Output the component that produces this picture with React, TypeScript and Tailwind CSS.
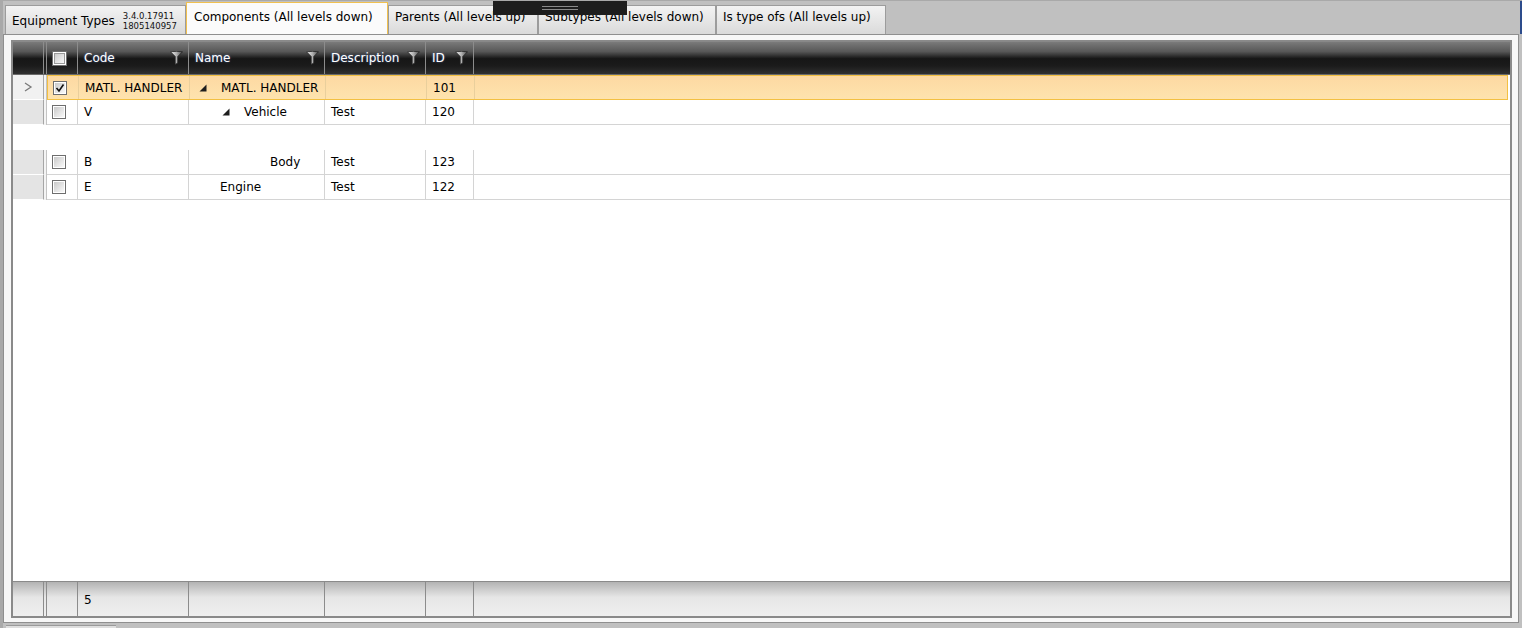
import React from "react";

const font = "font-['DejaVu_Sans','Liberation_Sans',sans-serif]";

const FilterIcon = () => (
  <svg width="13" height="14" viewBox="0 0 13 14" className="shrink-0">
    <defs>
      <linearGradient id="fg" x1="0" y1="0" x2="1" y2="0">
        <stop offset="0" stopColor="#f4f4f4" />
        <stop offset="0.5" stopColor="#b0b0b0" />
        <stop offset="1" stopColor="#4a4a4a" />
      </linearGradient>
    </defs>
    <path d="M0.5 0.8 Q6.5 -0.2 12.5 0.8 L7.8 5.5 V12 L5.2 13.5 V5.5 Z" fill="url(#fg)" stroke="#222" strokeWidth="0.8" />
  </svg>
);

const Expander = () => (
  <svg width="8" height="8" viewBox="0 0 8 8" className="shrink-0">
    <path d="M7.5 0.5 V7.5 H0.5 Z" fill="#1e1e1e" />
  </svg>
);

const Check = ({ checked, header }: { checked?: boolean; header?: boolean }) => (
  <div
    className={`flex items-center justify-center border border-[#6e6e6e] bg-white ${
      header ? "w-[15px] h-[15px]" : "w-[14px] h-[14px]"
    }`}
  >
    <div
      className={`flex items-center justify-center bg-[linear-gradient(135deg,#c9c9c9,#f9f9f9)] ${
        header ? "w-[11px] h-[11px] border border-[#9a9a9a]" : "w-[10px] h-[10px]"
      }`}
    >
      {checked && (
        <svg width="10" height="10" viewBox="0 0 10 10">
          <path d="M1.5 5 L4 8 L8.5 1.5" fill="none" stroke="#111" strokeWidth="1.6" />
        </svg>
      )}
    </div>
  </div>
);

const HeaderCell = ({ label, w, filter = true }: any) => (
  <div className={`${w} h-full flex items-center justify-between pl-[6px] pr-[5px] border-r border-[#8c8c8c] text-white text-[12px]`}>
    <span className="[text-shadow:0_0_2px_rgba(120,160,255,0.6)]">{label}</span>
    {filter && <FilterIcon />}
  </div>
);

const rows = [
  { code: "MATL. HANDLER", name: "MATL. HANDLER", pad: "pl-[9px]", exp: true, desc: "", id: "101", sel: true },
  { code: "V", name: "Vehicle", pad: "pl-[33px]", exp: true, desc: "Test", id: "120" },
  null,
  { code: "B", name: "Body", pad: "pl-[81px]", exp: false, desc: "Test", id: "123" },
  { code: "E", name: "Engine", pad: "pl-[31px]", exp: false, desc: "Test", id: "122" },
];

const Row = ({ r }: any) => {
  if (!r) return <div className="h-[25px] bg-white" />;
  const line = r.sel ? "border-[#e9cf9c]" : "border-[#d4d4d4]";
  return (
    <div className="flex h-[25px] text-[12px] text-black">
      <div className={`w-[31px] h-full border-r border-[#a6a6a6] border-b border-b-white flex items-center justify-center ${r.sel ? "bg-[#f1f1f1]" : "bg-[#e4e4e4]"}`}>
        {r.sel && (
          <svg width="10" height="10" viewBox="0 0 10 10">
            <path d="M2 1 L8 5 L2 9" fill="none" stroke="#7a7a7a" strokeWidth="1.3" />
          </svg>
        )}
      </div>
      <div className="w-[3px] h-full border-r border-[#c4c4c4] bg-[#f4f4f4]" />
      <div
        className={`flex flex-1 h-full ${
          r.sel
            ? "border border-[#f3c042] bg-[linear-gradient(to_bottom,#fdd9a2,#fee3ae)] mr-[2px]"
            : "border-b border-[#d4d4d4] bg-white"
        }`}
      >
        <div className={`w-[31px] h-full border-r ${line} flex items-center pl-[5px]`}>
          <Check checked={r.sel} />
        </div>
        <div className={`w-[111px] h-full border-r ${line} flex items-center pl-[6px] whitespace-nowrap`}>{r.code}</div>
        <div className={`w-[136px] h-full border-r ${line} flex items-center ${r.pad} whitespace-nowrap`}>
          {r.exp && (
            <span className="mr-[14px] flex">
              <Expander />
            </span>
          )}
          {r.name}
        </div>
        <div className={`w-[101px] h-full border-r ${line} flex items-center pl-[6px]`}>{r.desc}</div>
        <div className={`w-[48px] h-full border-r ${line} flex items-center pl-[6px]`}>{r.id}</div>
        <div className="flex-1" />
      </div>
    </div>
  );
};

const tabBase = "h-[29px] px-[6px] pt-[2px] border border-b-0 border-[#9c9c9c] bg-[linear-gradient(to_bottom,#f3f3f3,#dadada)] text-[12px] text-black whitespace-nowrap";

export default function App() {
  return (
    <div className={`relative w-[1522px] h-[628px] overflow-hidden bg-[#c0c0c0] border-t border-l-[3px] border-[#a9a9a9] ${font}`}>
      {/* Tabs */}
      <div className="flex items-end h-[33px] pl-[2px]">
        <div className={`${tabBase} w-[181px] flex items-center gap-[8px] pt-0`}>
          <span>Equipment Types</span>
          <div className="text-[8.5px] leading-[10px] text-[#111]">
            <div>3.4.0.17911</div>
            <div>1805140957</div>
          </div>
        </div>
        <div className="h-[32px] w-[202px] px-[7px] pt-[5px] border border-b-0 border-[#f0c050] bg-[#fbfbfb] text-[12px] whitespace-nowrap">
          Components (All levels down)
        </div>
        <div className={`${tabBase} w-[150px]`}>Parents (All levels up)</div>
        <div className={`${tabBase} w-[178px]`}>Subtypes (All levels down)</div>
        <div className={`${tabBase} w-[170px]`}>Is type ofs (All levels up)</div>
        <div className="flex-1" />
        <div className="w-[2px] h-[33px] bg-[#2d4c8c]" />
      </div>

      {/* Panel */}
      <div className="w-[1516px] h-[589px] border border-[#8f8f8f] bg-[#f7f7f7] pl-[7px] pr-[6px] pt-[5px] pb-[4px] flex">
        <div className="flex-1 border-2 border-[#8a8a8a] bg-white flex flex-col">
          {/* Header */}
          <div className="h-[33px] flex border-b border-[#6a6a6a] bg-[linear-gradient(to_bottom,#7a7a7a_0%,#575757_30%,#161616_52%,#1b1b1b_75%,#303030_100%)]">
            <div className="w-[31px] h-full border-r border-[#8c8c8c]" />
            <div className="w-[3px] h-full border-r border-[#8c8c8c]" />
            <div className="w-[31px] h-full border-r border-[#8c8c8c] flex items-center pl-[5px]">
              <Check header />
            </div>
            <HeaderCell label="Code" w="w-[111px]" />
            <HeaderCell label="Name" w="w-[136px]" />
            <HeaderCell label="Description" w="w-[101px]" />
            <HeaderCell label="ID" w="w-[48px]" />
            <div className="flex-1 border-t border-[#888] mt-[-1px]" />
          </div>

          {/* Body */}
          <div className="flex-1 flex flex-col">
            {rows.map((r, i) => (
              <Row key={i} r={r} />
            ))}
          </div>

          {/* Footer */}
          <div className="h-[35px] flex border-t border-[#8a8a8a] bg-[linear-gradient(to_bottom,#b3b3b3,#e6e6e6_45%,#efefef)] text-[12px]">
            <div className="w-[31px] h-full border-r border-[#8c8c8c]" />
            <div className="w-[3px] h-full border-r border-[#8c8c8c]" />
            <div className="w-[31px] h-full border-r border-[#8c8c8c]" />
            <div className="w-[111px] h-full border-r border-[#8c8c8c] flex items-center pl-[6px] pt-[2px]">5</div>
            <div className="w-[136px] h-full border-r border-[#8c8c8c]" />
            <div className="w-[101px] h-full border-r border-[#8c8c8c]" />
            <div className="w-[48px] h-full border-r border-[#8c8c8c]" />
            <div className="flex-1" />
          </div>
        </div>
      </div>

      <div className="ml-[3px] mt-[2px] w-[110px] h-[3px] bg-[#dedede] border-t border-[#9a9a9a]" />

      {/* drag handle overlay */}
      <div className="absolute left-[490px] top-0 w-[134px] h-[14px] bg-[#1d1d1d] flex flex-col items-center justify-center gap-[2px]">
        <div className="w-[36px] h-[1px] bg-[#8a8a8a]" />
        <div className="w-[36px] h-[1px] bg-[#8a8a8a]" />
      </div>
    </div>
  );
}
